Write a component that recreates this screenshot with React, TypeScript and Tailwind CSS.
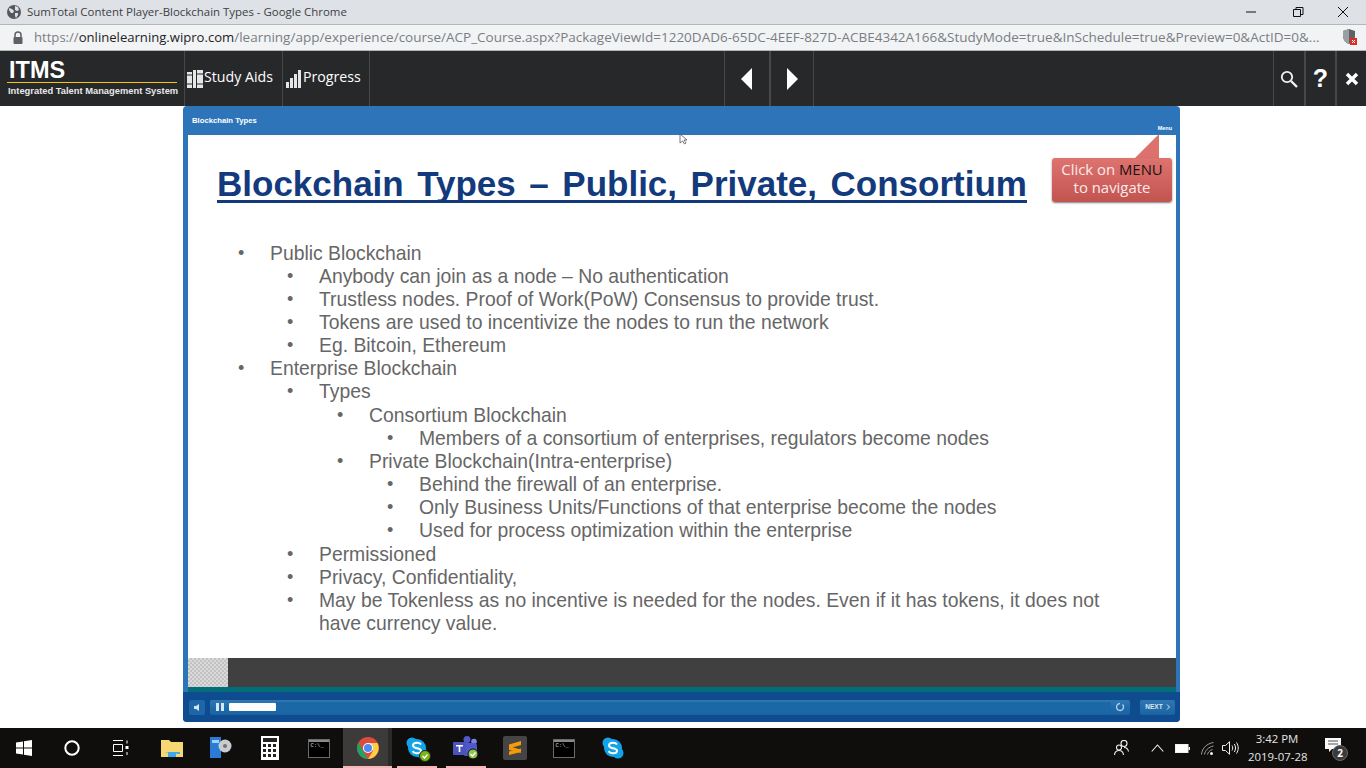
const ui = { fontFamily: '"Open Sans", "Noto Sans", sans-serif' };

const LINES: { level: number; text: string }[] = [
  { level: 0, text: 'Public Blockchain' },
  { level: 1, text: 'Anybody can join as a node – No authentication' },
  { level: 1, text: 'Trustless nodes. Proof of Work(PoW) Consensus to provide trust.' },
  { level: 1, text: 'Tokens are used to incentivize the nodes to run the network' },
  { level: 1, text: 'Eg. Bitcoin, Ethereum' },
  { level: 0, text: 'Enterprise Blockchain' },
  { level: 1, text: 'Types' },
  { level: 2, text: 'Consortium Blockchain' },
  { level: 3, text: 'Members of a consortium of enterprises, regulators become nodes' },
  { level: 2, text: 'Private Blockchain(Intra-enterprise)' },
  { level: 3, text: 'Behind the firewall of an enterprise.' },
  { level: 3, text: 'Only Business Units/Functions of that enterprise become the nodes' },
  { level: 3, text: 'Used for process optimization within the enterprise' },
  { level: 1, text: 'Permissioned' },
  { level: 1, text: 'Privacy, Confidentiality,' },
  { level: 1, text: 'May be Tokenless as no incentive is needed for the nodes. Even if it has tokens, it does not have currency value.' },
];

const INDENT = ['pl-[50px]', 'pl-[99px]', 'pl-[149px]', 'pl-[199px]'];

function TitleBar() {
  return (
    <div className="h-6 bg-[#dee1e6] flex items-center text-[#3c3f43] text-[11.45px]" style={ui}>
      <svg width="16" height="16" viewBox="0 0 16 16" className="ml-[6px] mr-[5px] shrink-0">
        <circle cx="8" cy="8" r="7" fill="#55585c" />
        <path d="M3 4l3 1 2 2-1 2-2 0-2-3zM9 2l3 1 1 3-2 1-2-1zM9 9l3 0 0 2-2 3-1-2z" fill="#dee1e6" />
      </svg>
      <span>SumTotal Content Player-Blockchain Types - Google Chrome</span>
      <div className="ml-auto flex items-center">
        <svg width="46" height="20" viewBox="0 0 46 20" className="mr-[-2px]"><path d="M15 10h10" stroke="#111" strokeWidth="1" /></svg>
        <svg width="46" height="20" viewBox="0 0 46 20" className="mr-[-1px]"><path d="M18.5 7.500h7v7h-7zM21 7.500V5.500h7v7h-2.500" fill="none" stroke="#111" strokeWidth="1" /></svg>
        <svg width="46" height="20" viewBox="0 0 46 20"><path d="M18 5l10 10M28 5l-10 10" stroke="#111" strokeWidth="1" /></svg>
      </div>
    </div>
  );
}

function AddressBar() {
  return (
    <div className="h-[27px] bg-[#f1f3f4] border-y border-[#b4b6b9] flex items-center text-[13.5px] text-[#7a7e84] relative" style={ui}>
      <svg width="12" height="14" viewBox="0 0 12 14" className="ml-[12px] mr-[10px] shrink-0">
        <path d="M3 6V4a3 3 0 0 1 6 0v2" fill="none" stroke="#5d6064" strokeWidth="1.500" />
        <rect x="1.500" y="6" width="9" height="7" rx="1" fill="#5d6064" />
      </svg>
      <span className="whitespace-nowrap w-[1296px] overflow-hidden">
        <span className="text-[13.1px]">https://</span><span className="text-[13.1px] text-[#1f2226]">onlinelearning.wipro.com</span>/learning/app/experience/course/ACP_Course.aspx?PackageViewId=1220DAD6-65DC-4EEF-827D-ACBE4342A166&amp;StudyMode=true&amp;InSchedule=true&amp;Preview=0&amp;ActID=0&amp;...
      </span>
      <svg width="16" height="18" viewBox="0 0 16 18" className="absolute left-[1342px] top-[3px]">
        <path d="M7 1l6 2v5c0 4-3 7-6 8-3-1-6-4-6-8V3z" fill="#5f6368" />
        <path d="M7 1v15c-3-1-6-4-6-8V3z" fill="#9a9da1" />
        <rect x="8" y="10" width="7" height="7" fill="#d93025" />
        <path d="M10 12l3 3M13 12l-3 3" stroke="#fff" strokeWidth="1" />
      </svg>
    </div>
  );
}

function Sep({ w = 'w-px' }: { w?: string }) {
  return <div className={`${w} self-stretch bg-[#47484a] shrink-0`} />;
}

function AppBar() {
  return (
    <div className="h-[55px] bg-[#27282a] flex items-stretch text-white shrink-0">
      <div className="w-[184px] pl-[7px] pt-[5px] shrink-0">
        <div className="h-[27px] border-b border-[#f5c518] w-[170px] pl-[2px] text-[23.5px] leading-[29px] font-bold" style={{ fontFamily: '"Liberation Sans", sans-serif' }}>ITMS</div>
        <div className="pl-[1px] mt-[2px] text-[9.35px] leading-[12px] font-bold text-[#e8e8e8] whitespace-nowrap" style={{ fontFamily: '"Liberation Sans", sans-serif' }}>Integrated Talent Management System</div>
      </div>
      <Sep />
      <div className="w-[97px] flex items-center pl-[2px] text-[14.2px]" style={ui}>
        <svg width="16" height="18" viewBox="0 0 16 18" fill="#e6e6e6" className="shrink-0">
          <rect x="0" y="2" width="5" height="16" /><rect x="6" y="0" width="3" height="18" /><rect x="10" y="0" width="6" height="18" />
          <path d="M0 5h5M0 14h5M10 4h6M10 14h6" stroke="#27282a" strokeWidth="1" />
        </svg>
        <span className="mb-[4px] ml-px">Study Aids</span>
      </div>
      <Sep />
      <div className="w-[86px] flex items-center pl-[3px] text-[14.2px]" style={ui}>
        <svg width="15" height="18" viewBox="0 0 15 18" fill="#e6e6e6" className="mr-[2px] shrink-0">
          <rect x="0" y="12" width="3" height="6" /><rect x="4" y="8" width="3" height="10" /><rect x="8" y="4" width="3" height="14" /><rect x="12" y="0" width="3" height="18" />
        </svg>
        <span className="mb-[4px]">Progress</span>
      </div>
      <Sep />
      <div className="w-[354px]" />
      <Sep />
      <div className="w-[44px] flex items-center justify-center">
        <svg width="12" height="22" viewBox="0 0 12 22"><path d="M11 0v22L0 11z" fill="#fff" /></svg>
      </div>
      <Sep w="w-[2px]" />
      <div className="w-[42px] flex items-center justify-center">
        <svg width="12" height="22" viewBox="0 0 12 22"><path d="M1 0v22l11-11z" fill="#fff" /></svg>
      </div>
      <Sep />
      <div className="w-[459px]" />
      <Sep />
      <div className="w-[30px] flex items-center justify-center">
        <svg width="18" height="18" viewBox="0 0 18 18" fill="none" stroke="#f2f2f2"><circle cx="7" cy="7" r="5.200" strokeWidth="1.800" /><path d="M11 11l6 6" strokeWidth="2.400" /></svg>
      </div>
      <Sep w="w-[2px]" />
      <div className="w-[29px] flex items-center justify-center text-[25px] font-bold" style={{ fontFamily: '"Liberation Sans", sans-serif' }}>?</div>
      <Sep w="w-[2px]" />
      <div className="flex-1 flex items-center justify-center">
        <svg width="14" height="14" viewBox="0 0 14 14"><path d="M2 2l10 10M12 2L2 12" stroke="#fff" strokeWidth="3.400" /></svg>
      </div>
    </div>
  );
}

function Callout() {
  return (
    <div className="absolute left-[864px] top-[-1px] w-[120px] h-[68px]">
      <svg width="120" height="25" viewBox="0 0 120 25" className="absolute left-0 top-0">
        <path d="M83 24L107 0v24z" fill="#dc716d" />
      </svg>
      <div className="absolute left-0 top-[24px] w-[120px] h-[44px] rounded-[3px] bg-gradient-to-b from-[#de736f] to-[#c25450] shadow-[0_1px_2px_rgba(0,0,0,0.5)] text-center text-[14.9px] leading-[18px] text-[#fbeaea] pt-[2px]" style={ui}>
        Click on <span className="text-[#1b1212]">MENU</span>
        <br />
        to navigate
      </div>
    </div>
  );
}

function Slide() {
  return (
    <div className="relative h-[523px] bg-white text-[#666666]" style={{ fontFamily: '"Liberation Sans", Arial, sans-serif' }}>
      <svg width="10" height="12" viewBox="0 0 10 12" className="absolute left-[491px] top-[-2px]">
        <path d="M1 1v9l2.500-2 2 3 1.500-1-2-3h3z" fill="#fff" stroke="#555" strokeWidth="0.800" />
      </svg>
      <Callout />
      <div className="pl-[29px] pt-[27px]">
        <div className="inline-block whitespace-nowrap border-b-[3px] border-[#123a7c] text-[35px] leading-[43px] font-bold text-[#123a7c] h-[41px]" style={{ wordSpacing: '3.8px' }}>
          Blockchain Types – Public, Private, Consortium
        </div>
      </div>
      <div className="mt-[38.5px] text-[19.35px] leading-[23.15px]">
        {LINES.map((l) => (
          <div key={l.text} className={`flex ${INDENT[l.level]} pr-[70px]`}>
            <span className="w-[32px] shrink-0 text-[18px]">•</span>
            <span>{l.text}</span>
          </div>
        ))}
      </div>
    </div>
  );
}

function Controls() {
  return (
    <div className="h-[30px] bg-[#0f4c8f] flex items-center pl-[6px] pr-[5px] rounded-b-[4px]">
      <div className="w-[16px] h-[15px] bg-[#1d66a8] rounded-[2px] flex items-center justify-center shrink-0">
        <svg width="7" height="7" viewBox="0 0 7 7"><path d="M0 2h2l3-2v7L2 5H0z" fill="#d5e4f2" /></svg>
      </div>
      <div className="ml-[5px] w-[920px] h-[15px] rounded-[2px] bg-gradient-to-b from-[#2f77b3] via-[#1f6cab] to-[#1a63a2] flex items-center pl-[6px] pr-[2px] shrink-0">
        <svg width="8" height="8" viewBox="0 0 8 8" className="shrink-0"><path d="M0 0h3v8H0zM5 0h3v8H5z" fill="#d9e7f3" /></svg>
        <div className="ml-[5px] w-[47px] h-[8px] bg-white rounded-[1px]" />
        <div className="flex-1 h-[11px] bg-[#1c67a6]" />
        <svg width="16" height="11" viewBox="0 0 16 11" fill="none" className="ml-px shrink-0">
          <path d="M10.500 2.500a3.500 3.500 0 1 1-2.500-1" stroke="#b9d0e6" strokeWidth="1.300" />
        </svg>
      </div>
      <div className="ml-[10px] flex-1 h-[15px] rounded-[2px] bg-gradient-to-b from-[#2f77b3] to-[#1a63a2] flex items-center justify-center gap-[3px] text-[6.500px] font-bold text-[#d9e7f3]" style={{ fontFamily: '"Liberation Sans", sans-serif' }}>
        NEXT
        <svg width="4" height="6" viewBox="0 0 4 6" fill="none"><path d="M1 0.500L3.500 3 1 5.500" stroke="#d9e7f3" strokeWidth="1" /></svg>
      </div>
    </div>
  );
}

function Player() {
  return (
    <div className="ml-[183px] w-[997px] h-[616px] bg-[#2d75b8] rounded-[4px] flex flex-col">
      <div className="h-[29px] relative shrink-0 text-white font-bold" style={{ fontFamily: '"Liberation Sans", sans-serif' }}>
        <span className="absolute left-[9px] top-[10px] text-[7.700px] leading-[10px]">Blockchain Types</span>
        <span className="absolute right-[8px] top-[18px] text-[5.500px] leading-[8px]">Menu</span>
      </div>
      <div className="ml-[5px] mr-[4px]">
        <Slide />
      </div>
      <div className="ml-[5px] mr-[4px] h-[29px] bg-[#404040] shrink-0">
        <div className="w-[40px] h-[29px] bg-[repeating-conic-gradient(#c2c2c2_0%_25%,#dadada_0%_50%)] bg-[length:4px_4px]" />
      </div>
      <div className="h-[5px] ml-[5px] mr-[4px] bg-[#036d78] shrink-0" />
      <Controls />
    </div>
  );
}

function TaskIcon({ children, className = 'w-[49px]' }: { children: React.ReactNode; className?: string }) {
  return <div className={`h-10 flex items-center justify-center relative shrink-0 ${className}`}>{children}</div>;
}

function Taskbar() {
  return (
    <div className="h-10 bg-[#100e0c] flex items-stretch text-[#eeeeee] shrink-0">
      <TaskIcon className="w-[48px]">
        <svg width="16" height="16" viewBox="0 0 16 16" fill="#fff"><path d="M0 2.500l7-1v6H0zM8 1.300l8-1.300v7.500H8zM0 8.500h7v6l-7-1zM8 8.500h8V16l-8-1.200z" /></svg>
      </TaskIcon>
      <TaskIcon className="w-[48px]">
        <svg width="16" height="16" viewBox="0 0 16 16" fill="none"><circle cx="8" cy="8" r="6.700" stroke="#fff" strokeWidth="2" /></svg>
      </TaskIcon>
      <TaskIcon className="w-[48px]">
        <svg width="17" height="16" viewBox="0 0 17 16" fill="none" stroke="#fff"><path d="M1 .5h10M1 15.500h10M1.500 4.500h9v7h-9zM15 .5v3M15 12v3" /><rect x="13.500" y="6" width="3" height="3" fill="#fff" stroke="none" /></svg>
      </TaskIcon>
      <TaskIcon className="w-[49px] ml-[3px]">
        <svg width="22" height="18" viewBox="0 0 22 18"><path d="M0 1h8l2 2h12v15H0z" fill="#f6d774" /><path d="M7 18v-5h8v5" fill="#3fa9e8" /><path d="M3 13h16v2h-2" fill="#3fa9e8" /></svg>
      </TaskIcon>
      <TaskIcon>
        <svg width="24" height="22" viewBox="0 0 24 22"><rect x="1" y="0" width="11" height="21" fill="#2b7bd6" /><rect x="3" y="3" width="7" height="3" fill="#9fd2f5" /><circle cx="16" cy="9" r="6.500" fill="#c8ccd0" /><circle cx="16" cy="9" r="2" fill="#6f7478" /></svg>
      </TaskIcon>
      <TaskIcon>
        <div className="w-[18px] h-[24px] bg-white flex flex-col items-center pt-[2px]">
          <div className="w-[14px] h-[4px] bg-[#222]" />
          <div className="grid grid-cols-3 gap-x-[2px] gap-y-[2px] mt-[2px]">
            {Array.from({ length: 9 }, (_, i) => <div key={i} className="w-[3px] h-[3px] bg-[#222]" />)}
          </div>
        </div>
      </TaskIcon>
      <TaskIcon>
        <Console />
      </TaskIcon>
      <TaskIcon className="w-[49px] bg-[#3d3b3a] border-b-2 border-[#f4b6b6]">
        <svg width="22" height="22" viewBox="0 0 22 22" className="mt-[2px]">
          <circle cx="11" cy="11" r="11" fill="#dd4b3e" />
          <path d="M11 6h9.500A11 11 0 0 1 11 22l5-8z" fill="#ffcd46" />
          <path d="M1.500 5.500L6 14l5 8A11 11 0 0 1 1.500 5.500z" fill="#1da462" />
          <circle cx="11" cy="11" r="5" fill="#fff" /><circle cx="11" cy="11" r="4" fill="#4c8bf5" />
        </svg>
        <div className="absolute right-0 top-0 w-[4px] h-full bg-[#2c2a29]" />
      </TaskIcon>
      <TaskIcon className="w-[49px] after:absolute after:bottom-0 after:left-[5px] after:right-[4px] after:h-[2px] after:bg-[#f4b6b6]">
        <Skype badge />
      </TaskIcon>
      <TaskIcon className="w-[49px] after:absolute after:bottom-0 after:left-[5px] after:right-[4px] after:h-[2px] after:bg-[#f4b6b6]">
        <svg width="26" height="24" viewBox="0 0 26 24">
          <circle cx="14" cy="3.500" r="3.500" fill="#5059c9" /><circle cx="21" cy="5.500" r="2.800" fill="#7b83eb" />
          <rect x="10" y="7" width="14" height="13" rx="3" fill="#5059c9" />
          <rect x="0" y="6" width="13" height="13" rx="1" fill="#4b53bc" />
          <path d="M3 9h7v1.500H7.300V16H5.700v-5.500H3z" fill="#fff" />
          <circle cx="20" cy="18" r="5" fill="#92c353" stroke="#100e0c" /><path d="M17.500 18l2 2 3-3.500" fill="none" stroke="#fff" strokeWidth="1.300" />
        </svg>
      </TaskIcon>
      <TaskIcon>
        <div className="w-[24px] h-[24px] rounded-[2px] bg-[#454545] flex items-center justify-center">
          <svg width="14" height="16" viewBox="0 0 14 16" fill="#f79a09"><path d="M1 4.500L13 1v4L1 8.500zM1 6.500l12 3V13L1 10zM1 11.500l12-3V12L1 15z" /></svg>
        </div>
      </TaskIcon>
      <TaskIcon>
        <Console />
      </TaskIcon>
      <TaskIcon>
        <Skype />
      </TaskIcon>
      <div className="flex-1" />
      <div className="flex items-center pr-[21px]">
        <svg width="15" height="16" viewBox="0 0 15 16" fill="none" stroke="#f0f0f0" strokeWidth="1.100" className="mr-[22px]">
          <circle cx="10" cy="3.500" r="3" /><circle cx="5" cy="7.500" r="2.500" /><path d="M.5 15c.3-3 2-4.500 4.500-4.500S9.200 12 9.500 15M10 7.500c2 0 4 1 4.500 4" />
        </svg>
        <svg width="13" height="8" viewBox="0 0 13 8" fill="none" stroke="#f0f0f0" strokeWidth="1.100" className="mr-[11px]"><path d="M.7 7.500L6.500 1l5.800 6.500" /></svg>
        <svg width="15" height="9" viewBox="0 0 15 9" className="mr-[11px]"><rect x=".5" y=".5" width="12.500" height="8" fill="#fff" stroke="#f0f0f0" /><rect x="13.500" y="3" width="1.500" height="3" fill="#f0f0f0" /></svg>
        <svg width="13" height="13" viewBox="0 0 13 13" fill="none" stroke="#9a9a9a" className="mr-[8px]"><path d="M.5 12.500C1 6 6 1.500 12.500.5M3.500 12.500c.5-4 4-7.500 9-8.500M6.500 12.500c.3-2 2-4 5-5" /><circle cx="10.500" cy="11.500" r="1.500" fill="#f0f0f0" stroke="none" /></svg>
        <svg width="17" height="14" viewBox="0 0 17 14" fill="none" stroke="#f0f0f0" strokeWidth="1" className="mr-[9px]"><path d="M.5 4.500h3L7.500.7v12.600L3.500 9.500h-3zM10 4.500c1 1.500 1 3.500 0 5M12.300 3c1.700 2.500 1.700 5.500 0 8M14.500 1.500c2.300 3.500 2.300 7.500 0 11" /></svg>
        <div className="w-[58px] text-center text-[11.400px] leading-[18px] whitespace-nowrap text-[#e4e4e4]" style={ui}>
          <div>3:42 PM</div>
          <div>2019-07-28</div>
        </div>
        <div className="relative ml-[19px] w-[20px] h-[20px]">
          <svg width="16" height="15" viewBox="0 0 16 15" className="absolute left-0 top-0" fill="#fafafa"><path d="M0 0h16v11H7l-3 3v-3H0z" /><path d="M3 3h10M3 6h10" stroke="#555" strokeWidth="1" /></svg>
          <div className="absolute left-[7px] top-[7px] w-[16px] h-[16px] rounded-full bg-[#3b3b3b] border border-[#666] flex items-center justify-center text-[10px] font-bold text-white" style={ui}>2</div>
        </div>
      </div>
    </div>
  );
}

function Console() {
  return (
    <div className="w-[22px] h-[19px] bg-black border border-[#6a6a6a] relative">
      <div className="h-[2px] bg-[#8a8a8a]" />
      <div className="pl-[2px] text-[5.500px] leading-[7px] text-[#dddddd] whitespace-nowrap" style={{ fontFamily: '"Liberation Mono", monospace' }}>C:\_</div>
    </div>
  );
}

function Skype({ badge = false }: { badge?: boolean }) {
  return (
    <div className="relative w-[22px] h-[22px]">
      <svg width="22" height="22" viewBox="0 0 22 22">
        <circle cx="6" cy="6" r="5.500" fill="#12a3e8" /><circle cx="16" cy="16" r="5.500" fill="#12a3e8" /><circle cx="11" cy="11" r="9" fill="#12a3e8" />
        <path d="M15 7.500C14 6 12.500 5.700 11 5.700c-2 0-4 1-4 2.800 0 3.700 8 2 8 5.300 0 1.600-2 2.500-4 2.500-2 0-3.500-.7-4.300-2.200" fill="none" stroke="#fff" strokeWidth="2" />
      </svg>
      {badge && (
        <svg width="12" height="12" viewBox="0 0 12 12" className="absolute right-[-3px] bottom-[-3px]">
          <circle cx="6" cy="6" r="5.500" fill="#7cb518" stroke="#222" /><path d="M3.500 6l2 2 3-3.500" fill="none" stroke="#fff" strokeWidth="1.200" />
        </svg>
      )}
    </div>
  );
}

export default function App() {
  return (
    <div className="w-[1366px] h-[768px] overflow-hidden bg-white flex flex-col">
      <TitleBar />
      <AddressBar />
      <AppBar />
      <div className="flex-1">
        <Player />
      </div>
      <Taskbar />
    </div>
  );
}
